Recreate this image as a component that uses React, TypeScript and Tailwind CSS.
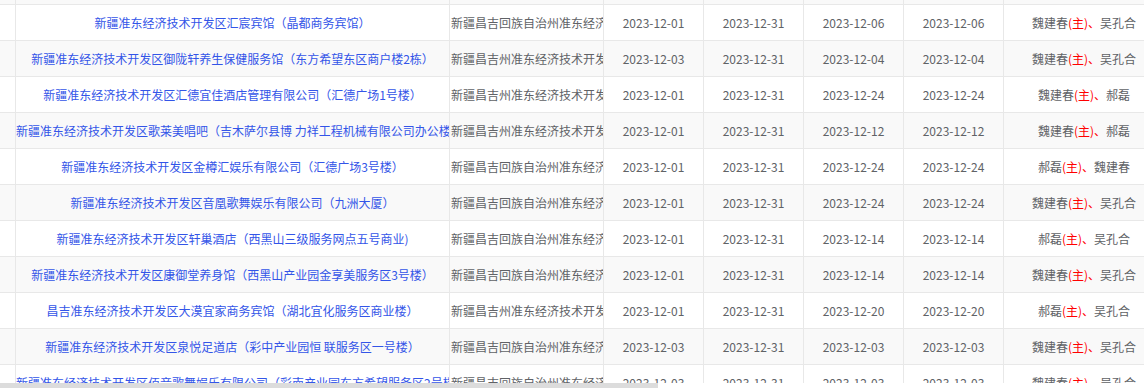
import React from "react";

type Row = {
  name: string;
  addr: string;
  d1: string;
  d2: string;
  d3: string;
  d4: string;
  lead: string;
  other: string;
};

const rows: Row[] = [
  { name: "新疆准东经济技术开发区某某宾馆（某某商务楼）", addr: "新疆昌吉回族自治州准东经济技术开发区", d1: "2023-12-01", d2: "2023-12-31", d3: "2023-12-06", d4: "2023-12-06", lead: "魏建春", other: "吴孔合" },
  { name: "新疆准东经济技术开发区汇宸宾馆（晶都商务宾馆）", addr: "新疆昌吉回族自治州准东经济技术开发区", d1: "2023-12-01", d2: "2023-12-31", d3: "2023-12-06", d4: "2023-12-06", lead: "魏建春", other: "吴孔合" },
  { name: "新疆准东经济技术开发区御陇轩养生保健服务馆（东方希望东区商户楼2栋）", addr: "新疆昌吉州准东经济技术开发区", d1: "2023-12-03", d2: "2023-12-31", d3: "2023-12-04", d4: "2023-12-04", lead: "魏建春", other: "吴孔合" },
  { name: "新疆准东经济技术开发区汇德宜佳酒店管理有限公司（汇德广场1号楼）", addr: "新疆昌吉州准东经济技术开发区", d1: "2023-12-01", d2: "2023-12-31", d3: "2023-12-24", d4: "2023-12-24", lead: "魏建春", other: "郝磊" },
  { name: "新疆准东经济技术开发区歌莱美唱吧（吉木萨尔县博 力祥工程机械有限公司办公楼）", addr: "新疆昌吉州准东经济技术开发区", d1: "2023-12-01", d2: "2023-12-31", d3: "2023-12-12", d4: "2023-12-12", lead: "魏建春", other: "郝磊" },
  { name: "新疆准东经济技术开发区金樽汇娱乐有限公司（汇德广场3号楼）", addr: "新疆昌吉回族自治州准东经济技术开发区", d1: "2023-12-01", d2: "2023-12-31", d3: "2023-12-24", d4: "2023-12-24", lead: "郝磊", other: "魏建春" },
  { name: "新疆准东经济技术开发区音凰歌舞娱乐有限公司（九洲大厦）", addr: "新疆昌吉回族自治州准东经济技术开发区", d1: "2023-12-01", d2: "2023-12-31", d3: "2023-12-24", d4: "2023-12-24", lead: "魏建春", other: "吴孔合" },
  { name: "新疆准东经济技术开发区轩巢酒店（西黑山三级服务网点五号商业)", addr: "新疆昌吉回族自治州准东经济技术开发区", d1: "2023-12-01", d2: "2023-12-31", d3: "2023-12-14", d4: "2023-12-14", lead: "郝磊", other: "吴孔合" },
  { name: "新疆准东经济技术开发区康御堂养身馆（西黑山产业园金享美服务区3号楼）", addr: "新疆昌吉回族自治州准东经济技术开发区", d1: "2023-12-01", d2: "2023-12-31", d3: "2023-12-14", d4: "2023-12-14", lead: "魏建春", other: "吴孔合" },
  { name: "昌吉准东经济技术开发区大漠宜家商务宾馆（湖北宜化服务区商业楼）", addr: "新疆昌吉州准东经济技术开发区", d1: "2023-12-01", d2: "2023-12-31", d3: "2023-12-20", d4: "2023-12-20", lead: "郝磊", other: "吴孔合" },
  { name: "新疆准东经济技术开发区泉悦足道店（彩中产业园恒 联服务区一号楼）", addr: "新疆昌吉回族自治州准东经济技术开发区", d1: "2023-12-03", d2: "2023-12-31", d3: "2023-12-03", d4: "2023-12-03", lead: "魏建春", other: "吴孔合" },
  { name: "新疆准东经济技术开发区佰音歌舞娱乐有限公司（彩南产业园东方希望服务区2号楼）", addr: "新疆昌吉回族自治州准东经济技术开发区", d1: "2023-12-03", d2: "2023-12-31", d3: "2023-12-03", d4: "2023-12-03", lead: "魏建春", other: "吴孔合" },
];

function DateCell({ v }: { v: string }) {
  return (
    <div className="w-[100px] shrink-0 border-r border-[#e8e8e8] flex items-center justify-center overflow-hidden whitespace-nowrap">
      {v}
    </div>
  );
}

export default function App() {
  return (
    <div
      className="w-[1144px] h-[388px] overflow-hidden bg-white text-[12px] text-[#606266]"
      style={{ fontFamily: '"Noto Sans CJK SC", "Noto Sans", sans-serif' }}
    >
      <div className="h-[383px] overflow-hidden">
        <div className="mt-[-31px] w-[1164px] flex flex-col">
          {rows.map((r, i) => (
            <div
              key={i}
              className={
                "h-[36px] flex border-b border-[#e8e8e8] " +
                (i % 2 === 0 ? "bg-[#f9f9f9]" : "bg-white")
              }
            >
              <div className="w-[16px] shrink-0 border-r border-[#e8e8e8]" />
              <div className="w-[434px] shrink-0 border-r border-[#e8e8e8] flex items-center overflow-hidden">
                <div className="w-full text-center whitespace-nowrap overflow-hidden text-[#3355e8]">
                  {r.name}
                </div>
              </div>
              <div className="w-[154px] shrink-0 border-r border-[#e8e8e8] flex items-center overflow-hidden whitespace-nowrap pl-px">
                {r.addr}
              </div>
              <DateCell v={r.d1} />
              <DateCell v={r.d2} />
              <DateCell v={r.d3} />
              <DateCell v={r.d4} />
              <div className="w-[160px] shrink-0 flex items-center justify-center whitespace-nowrap">
                <span>{r.lead}</span>
                <span className="text-[#ff0000]">(主)、</span>
                <span>{r.other}</span>
              </div>
            </div>
          ))}
        </div>
      </div>
      <div className="h-[5px] bg-white flex">
        <div className="w-[658px] h-full bg-[#dcdcdc]" />
      </div>
    </div>
  );
}
